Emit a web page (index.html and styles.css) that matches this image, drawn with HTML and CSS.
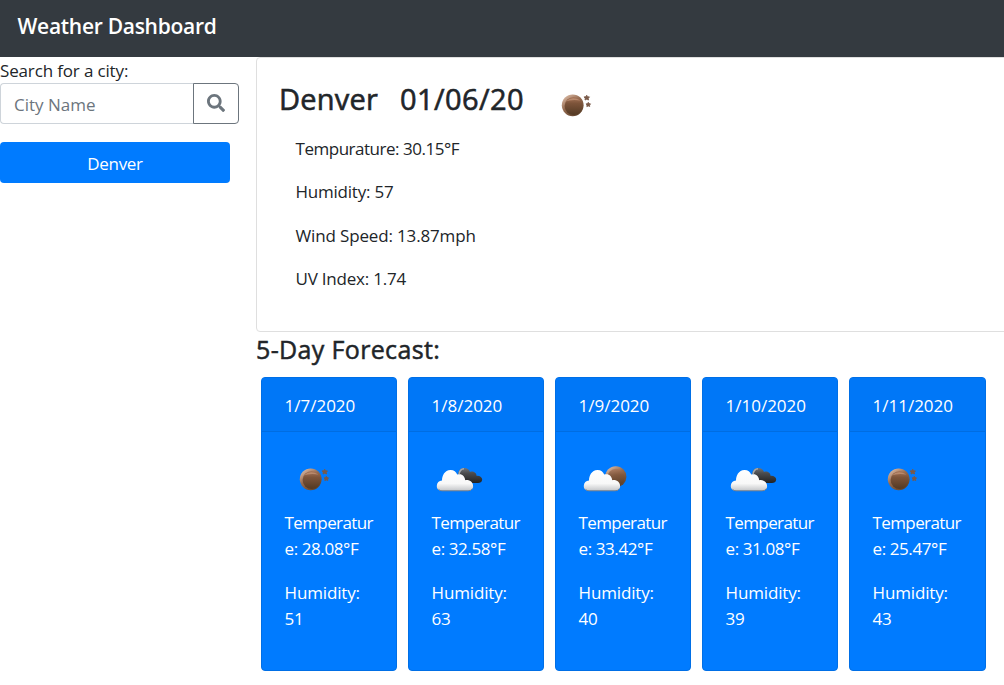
FILE: index.html
```html
<!DOCTYPE html>
<html lang="en">
<head>
<meta charset="utf-8">
<title>Weather Dashboard</title>
<link rel="stylesheet" href="styles.css">
</head>
<body>
<svg class="defs" width="0" height="0" aria-hidden="true">
  <defs>
    <linearGradient id="moonFill" x1="0" y1="0" x2="0" y2="1"><stop offset="0" stop-color="#a8765a"/><stop offset=".35" stop-color="#7d543a"/><stop offset="1" stop-color="#523923"/></linearGradient>
    <linearGradient id="moonRim" x1="0" y1="0" x2=".7" y2="1"><stop offset="0" stop-color="#eccdb9"/><stop offset=".5" stop-color="#956b50"/><stop offset="1" stop-color="#60432d"/></linearGradient>
    <linearGradient id="cloudFill" x1="0" y1="0" x2="0" y2="1"><stop offset="0" stop-color="#fff"/><stop offset=".65" stop-color="#f8f8f8"/><stop offset="1" stop-color="#c4c6c9"/></linearGradient>
    <linearGradient id="darkFill" x1="0" y1="0" x2="0" y2="1"><stop offset="0" stop-color="#70757b"/><stop offset=".35" stop-color="#4b4c4e"/><stop offset="1" stop-color="#222"/></linearGradient>
    <symbol id="clear" viewBox="0 0 60 40">
      <circle cx="20.7" cy="19.3" r="10.9" fill="url(#moonRim)"/>
      <circle cx="21.7" cy="20" r="9.1" fill="url(#moonFill)"/>
      <path d="M13.7 15.5Q20 9.5 28.5 14.5Q20 13 13.7 15.5Z" fill="#d9a98c" opacity=".5"/>
      <path d="M34.7 9.2l.9 1.5 1.9.2-1.2 1.3.3 1.8-1.9-.7-1.7.7.2-1.8-1.2-1.3 1.9-.2zM36.3 16.3l.7 1.3 1.6.3-1.1 1.1.2 1.6-1.4-.7-1.5.7.2-1.6-1-1.1 1.5-.3z" fill="#795948" stroke="#795948" stroke-width=".8" stroke-linejoin="round"/>
    </symbol>
    <symbol id="cloud" viewBox="0 0 60 40">
      <path d="M12 30.8C8 30.8 6.7 28.5 6.8 25.8 6.9 22.8 9 20.7 12 20.5 12 16 14.5 10 20.5 10 24 10 26.2 12 27.2 14.6 31.5 13 35 16 35.2 20.2 40 19.6 43.2 22.5 43.1 26.2 43 29.5 40.6 30.8 38 30.8Z" fill="url(#cloudFill)"/>
      <path d="M8.5 29.4Q10 30.8 12 30.8H38Q41 30.8 42.3 28.7" fill="none" stroke="#787d83" stroke-width=".9"/>
    </symbol>
    <symbol id="broken" viewBox="0 0 60 40">
      <path d="M28.3 14C28.5 10 31 8 34 8 37.5 8 39.5 10 40 12 43 10.7 46.5 12.8 46.5 15.8 50 15.5 52.3 17.4 52.2 19.8 52 22.2 50 23 48 23H35Z" fill="url(#darkFill)"/>
      <path d="M29 14Q30 9 34 8.8" fill="none" stroke="#a5a9ad" stroke-width="1.6"/>
      <use href="#cloud"/>
    </symbol>
    <symbol id="few" viewBox="0 0 60 40">
      <circle cx="38.8" cy="16.8" r="10.6" fill="url(#moonRim)"/>
      <circle cx="39" cy="17.6" r="8.8" fill="url(#moonFill)" opacity=".75"/>
      <use href="#cloud"/>
    </symbol>
  </defs>
</svg>
<nav class="navbar"><span class="brand">Weather Dashboard</span></nav>
<div class="layout">
  <aside class="sidebar">
    <label class="search-label" for="city"><span>Search for a city:</span></label>
    <div class="search">
      <input id="city" class="search-input" type="text" placeholder="City Name">
      <button class="search-button" type="button" aria-label="Search">
        <svg viewBox="0 0 512 512" width="18" height="18"><path fill="currentColor" d="M505 442.7L405.3 343c-4.5-4.5-10.600-7-17-7H372c27.600-35.300 44-79.700 44-128C416 93.100 322.900 0 208 0S0 93.100 0 208s93.100 208 208 208c48.300 0 92.700-16.400 128-44v16.300c0 6.400 2.500 12.500 7 17l99.700 99.700c9.400 9.400 24.600 9.400 33.900 0l28.300-28.300c9.400-9.400 9.400-24.600.1-34zM208 336c-70.700 0-128-57.200-128-128 0-70.700 57.200-128 128-128 70.700 0 128 57.200 128 128 0 70.700-57.200 128-128 128z"/></svg>
      </button>
    </div>
    <button class="city-button" type="button">Denver</button>
  </aside>
  <main class="main">
    <section class="current">
      <h2 class="current-title"><span class="name">Denver</span><span class="date">01/06/20</span><svg class="icon" width="60" height="40"><use href="#clear"/></svg></h2>
      <div class="readings">
        <p class="temperature">Tempurature: 30.15°F</p>
        <p class="humidity">Humidity: 57</p>
        <p class="wind">Wind Speed: 13.87mph</p>
        <p class="uv">UV Index: 1.74</p>
      </div>
    </section>
    <h3 class="forecast-title">5-Day Forecast:</h3>
    <div class="forecast">
      <article class="day"><header>1/7/2020</header><div class="day-body"><svg class="icon icon-clear" width="60" height="40"><use href="#clear"/></svg><p><span class="term">Temperatur</span><br>e: 28.08°F</p><p class="humid">Humidity:<br>51</p></div></article>
      <article class="day"><header>1/8/2020</header><div class="day-body"><svg class="icon" width="60" height="40"><use href="#broken"/></svg><p><span class="term">Temperatur</span><br>e: 32.58°F</p><p class="humid">Humidity:<br>63</p></div></article>
      <article class="day"><header>1/9/2020</header><div class="day-body"><svg class="icon" width="60" height="40"><use href="#few"/></svg><p><span class="term">Temperatur</span><br>e: 33.42°F</p><p class="humid">Humidity:<br>40</p></div></article>
      <article class="day"><header>1/10/2020</header><div class="day-body"><svg class="icon" width="60" height="40"><use href="#broken"/></svg><p><span class="term">Temperatur</span><br>e: 31.08°F</p><p class="humid">Humidity:<br>39</p></div></article>
      <article class="day"><header>1/11/2020</header><div class="day-body"><svg class="icon icon-clear" width="60" height="40"><use href="#clear"/></svg><p><span class="term">Temperatur</span><br>e: 25.47°F</p><p class="humid">Humidity:<br>43</p></div></article>
    </div>
  </main>
</div>
</body>
</html>
```
FILE: styles.css
```css
* { box-sizing: border-box; }
html, body { height: 100%; }
body {
  margin: 0;
  overflow: hidden;
  background: #fff;
  color: #212529;
  font: 400 17px/26px "Open Sans", "Noto Sans", sans-serif;
  letter-spacing: -0.4px;
}
h2, h3, p { margin: 0; }
button, input { font: inherit; letter-spacing: inherit; }
.defs { display: block; height: 0; }
.navbar { height: 57px; padding: 9px 17.5px; background: #343a40; }
.brand { display: block; color: #fff; font-size: 21px; font-weight: 600; line-height: 35px; letter-spacing: -0.28px; }
.layout { display: grid; grid-template-columns: 256px 780px; }
.sidebar { display: flex; flex-direction: column; align-items: flex-start; }
.search-label { height: 26px; padding-top: 1px; white-space: nowrap; letter-spacing: -0.15px; }
.search { display: flex; width: 239px; height: 41px; }
.search-input {
  width: 194px;
  padding: 3px 13px 0;
  border: 1px solid #ced4da;
  border-right: 0;
  border-radius: 4px 0 0 4px;
  outline: 0;
  background: #fff;
  letter-spacing: 0;
}
.search-input::placeholder { color: #6c757d; opacity: 1; }
.search-button {
  display: flex;
  align-items: center;
  justify-content: center;
  width: 46px;
  margin-left: -1px;
  padding: 0 0 1px;
  border: 1px solid #6c757d;
  border-radius: 0 4px 4px 0;
  background: #fff;
  color: #6c757d;
}
.city-button {
  width: 230px;
  height: 41px;
  margin-top: 18px;
  padding: 3px 0 0;
  border: 0;
  border-radius: 4px;
  background: #007bff;
  color: #fff;
  letter-spacing: -0.3px;
}
.current { height: 275px; padding: 21px 22px; border: 1px solid #dfdfdf; border-radius: 4px; }
.current-title { display: flex; height: 43px; font-size: 29px; font-weight: 400; line-height: 40px; letter-spacing: 0.2px; -webkit-text-stroke: 0.6px #212529; }
.current-title .name { width: 121px; }
.current-title .date { width: 152px; letter-spacing: 0.4px; }
.current-title .icon { margin-top: 6.5px; -webkit-text-stroke: 0; }
.readings { display: grid; gap: 17.4px; padding: 14px 16.5px; letter-spacing: -0.22px; }
.readings .temperature { letter-spacing: -0.48px; }
.readings .wind { letter-spacing: -0.15px; }
.forecast-title { height: 45px; padding-top: 1px; font-size: 25px; font-weight: 400; line-height: 32px; letter-spacing: 0.35px; -webkit-text-stroke: 0.5px #212529; }
.forecast { display: flex; gap: 11px; padding-left: 5px; }
.day { width: 136px; height: 294px; border: 1px solid #006fe6; border-radius: 4px; background: #007bff; color: #fff; overflow: hidden; }
.day:last-child { width: 137px; }
.day header { height: 54px; padding: 15px 22.5px; border-bottom: 1px solid #006de2; background: #0077f7; letter-spacing: 0; }
.day-body { display: flex; flex-direction: column; padding: 28px 22.5px; }
.day .icon { margin: 0 0 10px -1.5px; }
.day .icon-clear { margin-left: 5.5px; }
.day p { margin-bottom: 18px; white-space: nowrap; }
.day .term { letter-spacing: -0.6px; }
.day .humid { letter-spacing: -0.15px; }
```
